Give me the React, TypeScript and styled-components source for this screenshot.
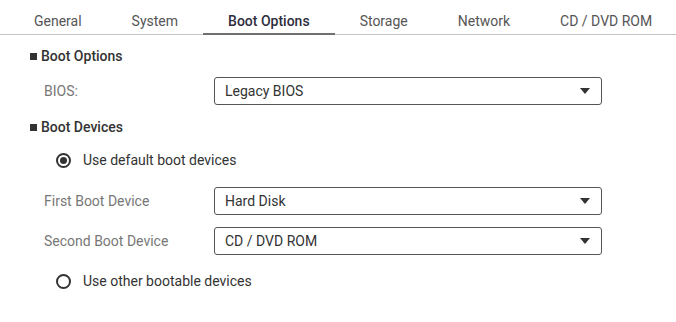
import React from "react";
import styled, { createGlobalStyle } from "styled-components";

const Global = createGlobalStyle`
  html, body { margin: 0; padding: 0; background: #fff; }
  body { font-family: Roboto, "Noto Sans", "Liberation Sans", sans-serif; font-size: 14px; color: #333; }
  * { box-sizing: border-box; }
`;

const Page = styled.div`
  width: 676px;
  height: 322px;
  display: flex;
  flex-direction: column;
`;

const TabBar = styled.div`
  display: flex;
  height: 35px;
  padding-left: 9px;
  border-bottom: 1px solid #c4c4c4;
`;

const Tab = styled.div<{ $active?: boolean }>`
  padding: 13px 25px 0;
  height: 35px;
  line-height: 16px;
  font-size: 14px;
  color: ${(p) => (p.$active ? "#2e2e40" : "#555")};
  font-weight: ${(p) => (p.$active ? 500 : 400)};
  border-bottom: ${(p) => (p.$active ? "2px solid #707070" : "none")};
  white-space: nowrap;
`;

const Content = styled.div`
  display: flex;
  flex-direction: column;
`;

const SectionTitle = styled.div<{ $top: number }>`
  display: flex;
  align-items: center;
  gap: 4px;
  height: 20px;
  margin-top: ${(p) => p.$top}px;
  padding-left: 30px;
  font-weight: 500;
  color: #333;
  &::before {
    content: "";
    width: 7px;
    height: 7px;
    background: #333;
  }
`;

const FieldRow = styled.div<{ $top: number }>`
  display: flex;
  align-items: center;
  margin-top: ${(p) => p.$top}px;
  padding-left: 44px;
`;

const Label = styled.div`
  width: 170px;
  color: #777;
`;

const Select = styled.div`
  width: 388px;
  height: 28px;
  border: 1px solid #555;
  border-radius: 3px;
  display: flex;
  align-items: center;
  justify-content: space-between;
  padding: 0 11px 0 10px;
  color: #333;
`;

const Arrow = styled.span`
  width: 0;
  height: 0;
  border-left: 5px solid transparent;
  border-right: 5px solid transparent;
  border-top: 6px solid #333;
`;

const RadioRow = styled.div<{ $top: number }>`
  display: flex;
  align-items: center;
  height: 20px;
  margin-top: ${(p) => p.$top}px;
  padding-left: 56px;
  gap: 12px;
  color: #333;
`;

const RadioCircle = styled.span<{ $checked?: boolean }>`
  width: 15px;
  height: 15px;
  border: 2px solid #333;
  border-radius: 50%;
  display: flex;
  align-items: center;
  justify-content: center;
  &::after {
    content: "";
    width: 7px;
    height: 7px;
    border-radius: 50%;
    background: ${(p) => (p.$checked ? "#333" : "transparent")};
  }
`;

const tabs = ["General", "System", "Boot Options", "Storage", "Network", "CD / DVD ROM"];

export default function App() {
  return (
    <Page>
      <Global />
      <TabBar>
        {tabs.map((t) => (
          <Tab key={t} $active={t === "Boot Options"}>
            {t}
          </Tab>
        ))}
      </TabBar>
      <Content>
        <SectionTitle $top={11}>Boot Options</SectionTitle>
        <FieldRow $top={11}>
          <Label>BIOS:</Label>
          <Select>
            Legacy BIOS
            <Arrow />
          </Select>
        </FieldRow>
        <SectionTitle $top={12}>Boot Devices</SectionTitle>
        <RadioRow $top={13}>
          <RadioCircle $checked />
          Use default boot devices
        </RadioRow>
        <FieldRow $top={17}>
          <Label>First Boot Device</Label>
          <Select>
            Hard Disk
            <Arrow />
          </Select>
        </FieldRow>
        <FieldRow $top={12}>
          <Label>Second Boot Device</Label>
          <Select>
            CD / DVD ROM
            <Arrow />
          </Select>
        </FieldRow>
        <RadioRow $top={16}>
          <RadioCircle />
          Use other bootable devices
        </RadioRow>
      </Content>
    </Page>
  );
}
